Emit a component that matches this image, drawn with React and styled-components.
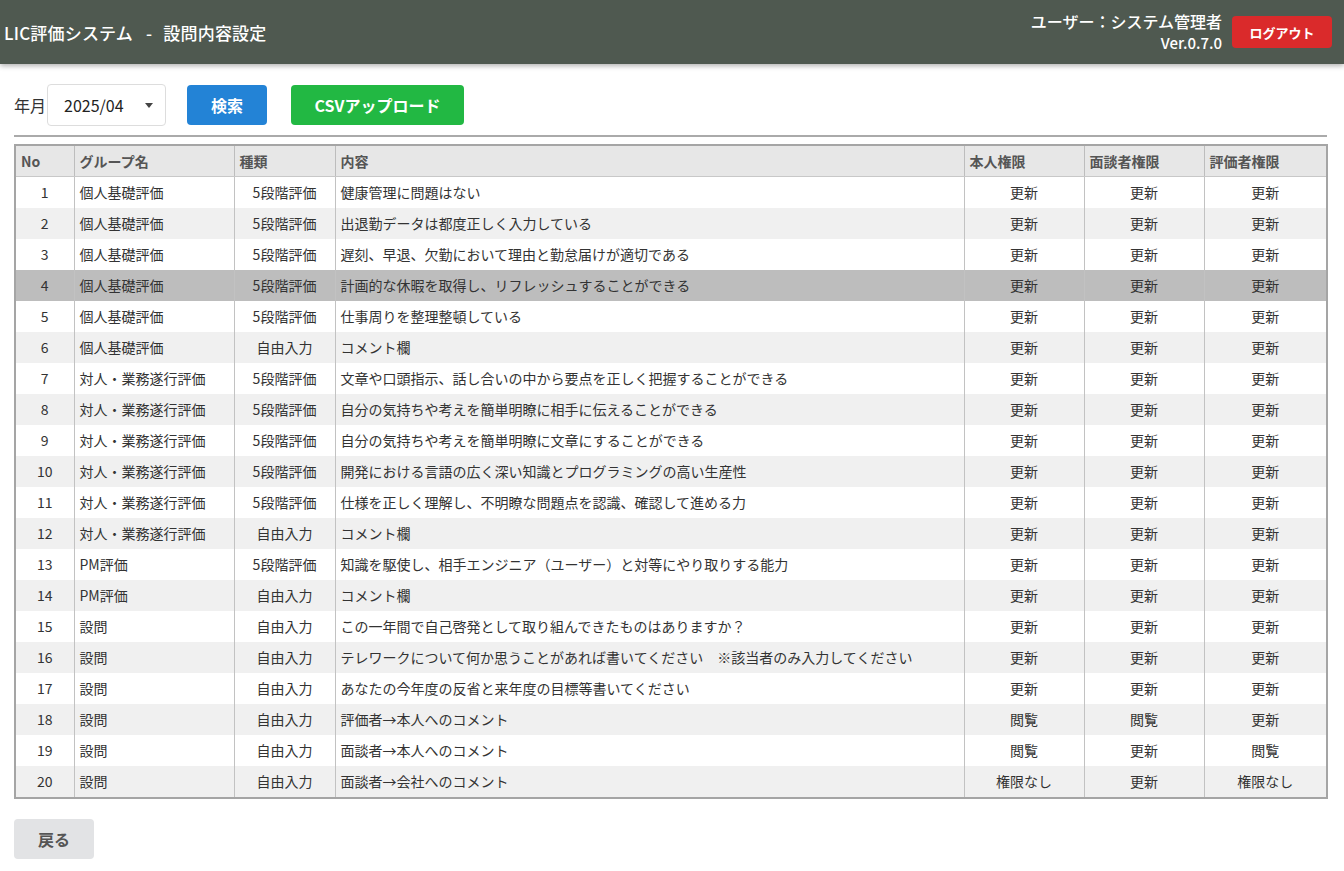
import React from 'react';
import styled, { createGlobalStyle } from 'styled-components';

const GlobalStyle = createGlobalStyle`
  body {
    margin: 0;
    background: #fff;
    font-family: "Noto Sans CJK JP", "Noto Sans", sans-serif;
    color: #333;
  }
`;

const Header = styled.header`
  display: flex;
  align-items: center;
  justify-content: space-between;
  height: 64px;
  padding: 0 12px 0 4px;
  background: #4f5950;
  box-shadow: 0 2px 5px rgba(0, 0, 0, 0.3);
  color: #fff;
`;

const Title = styled.h1`
  margin: 0;
  font-size: 17px;
  font-weight: 500;
  letter-spacing: 0.2px;
`;

const Dash = styled.span`
  margin: 0 11px 0 13px;
`;

const HeaderRight = styled.div`
  display: flex;
  align-items: center;
  gap: 10px;
`;

const UserInfo = styled.div`
  display: flex;
  flex-direction: column;
  align-items: flex-end;
  line-height: 22px;
  font-size: 16px;
  font-weight: 500;
`;

const Version = styled.span`
  font-size: 15px;
`;

const LogoutButton = styled.button`
  width: 100px;
  height: 32px;
  border: none;
  border-radius: 4px;
  background: #da2a2b;
  color: #fff;
  font-family: inherit;
  font-size: 13px;
  font-weight: 700;
  cursor: pointer;
`;

const Main = styled.main`
  padding: 20px 17px 0 14px;
`;

const Toolbar = styled.div`
  display: flex;
  align-items: center;
  height: 42px;
  padding-bottom: 9px;
  border-bottom: 2px solid #aaa;
`;

const Label = styled.span`
  font-size: 16px;
  margin-right: 1px;
`;

const SelectBox = styled.div`
  display: flex;
  align-items: center;
  justify-content: space-between;
  box-sizing: border-box;
  width: 119px;
  height: 42px;
  padding: 0 12px 0 16px;
  border: 1px solid #ddd;
  border-radius: 4px;
  font-size: 16px;
  color: #222;
`;

const Caret = styled.span`
  width: 0;
  height: 0;
  border-left: 4px solid transparent;
  border-right: 4px solid transparent;
  border-top: 5px solid #444;
`;

const ActionButton = styled.button`
  height: 40px;
  width: ${p => p.$width}px;
  margin-left: ${p => p.$gap}px;
  border: none;
  border-radius: 4px;
  background: ${p => p.$color};
  color: #fff;
  font-family: inherit;
  font-size: 16px;
  font-weight: 700;
  cursor: pointer;
`;

const Table = styled.table`
  width: 1312px;
  margin-top: 7px;
  table-layout: fixed;
  border-collapse: collapse;
  border: 2px solid #a5a5a5;
  font-size: 14px;
`;

const Th = styled.th`
  box-sizing: border-box;
  height: 31px;
  padding: 0 5px;
  background: #e7e7e7;
  border: 1px solid #bdbdbd;
  border-bottom: 1px solid #c8c8c8;
  text-align: left;
  font-weight: 700;
  color: #555;
  width: ${p => p.$w}px;
`;

const Row = styled.tr`
  background: ${p => (p.$selected ? '#bdbdbd' : p.$even ? '#f0f0f0' : '#fff')};
`;

const Td = styled.td`
  height: 31px;
  padding: 0 5px;
  border-left: 1px solid #c2c2c2;
  border-right: 1px solid #c2c2c2;
  text-align: ${p => (p.$center ? 'center' : 'left')};
  color: #333;
  white-space: nowrap;
  overflow: hidden;
`;

const BackButton = styled.button`
  margin-top: 20px;
  width: 80px;
  height: 40px;
  border: none;
  border-radius: 4px;
  background: #e2e3e5;
  color: #555;
  font-family: inherit;
  font-size: 16px;
  font-weight: 700;
  cursor: pointer;
`;

const KIHON = '個人基礎評価';
const TAIJIN = '対人・業務遂行評価';
const FIVE = '5段階評価';
const FREE = '自由入力';
const U = '更新';
const V = '閲覧';
const N = '権限なし';

const rows = [
  [KIHON, FIVE, '健康管理に問題はない', U, U, U],
  [KIHON, FIVE, '出退勤データは都度正しく入力している', U, U, U],
  [KIHON, FIVE, '遅刻、早退、欠勤において理由と勤怠届けが適切である', U, U, U],
  [KIHON, FIVE, '計画的な休暇を取得し、リフレッシュすることができる', U, U, U],
  [KIHON, FIVE, '仕事周りを整理整頓している', U, U, U],
  [KIHON, FREE, 'コメント欄', U, U, U],
  [TAIJIN, FIVE, '文章や口頭指示、話し合いの中から要点を正しく把握することができる', U, U, U],
  [TAIJIN, FIVE, '自分の気持ちや考えを簡単明瞭に相手に伝えることができる', U, U, U],
  [TAIJIN, FIVE, '自分の気持ちや考えを簡単明瞭に文章にすることができる', U, U, U],
  [TAIJIN, FIVE, '開発における言語の広く深い知識とプログラミングの高い生産性', U, U, U],
  [TAIJIN, FIVE, '仕様を正しく理解し、不明瞭な問題点を認識、確認して進める力', U, U, U],
  [TAIJIN, FREE, 'コメント欄', U, U, U],
  ['PM評価', FIVE, '知識を駆使し、相手エンジニア（ユーザー）と対等にやり取りする能力', U, U, U],
  ['PM評価', FREE, 'コメント欄', U, U, U],
  ['設問', FREE, 'この一年間で自己啓発として取り組んできたものはありますか？', U, U, U],
  ['設問', FREE, 'テレワークについて何か思うことがあれば書いてください　※該当者のみ入力してください', U, U, U],
  ['設問', FREE, 'あなたの今年度の反省と来年度の目標等書いてください', U, U, U],
  ['設問', FREE, '評価者→本人へのコメント', V, V, U],
  ['設問', FREE, '面談者→本人へのコメント', V, U, V],
  ['設問', FREE, '面談者→会社へのコメント', N, U, N],
];

const columns = [
  ['No', 59],
  ['グループ名', 160],
  ['種類', 101],
  ['内容', 629],
  ['本人権限', 120],
  ['面談者権限', 120],
  ['評価者権限', 123],
];

export default function App() {
  return (
    <>
      <GlobalStyle />
      <Header>
        <Title>
          LIC評価システム<Dash>-</Dash>設問内容設定
        </Title>
        <HeaderRight>
          <UserInfo>
            <span>ユーザー：システム管理者</span>
            <Version>Ver.0.7.0</Version>
          </UserInfo>
          <LogoutButton>ログアウト</LogoutButton>
        </HeaderRight>
      </Header>
      <Main>
        <Toolbar>
          <Label>年月</Label>
          <SelectBox>
            <span>2025/04</span>
            <Caret />
          </SelectBox>
          <ActionButton $width={80} $gap={21} $color="#2383d6">検索</ActionButton>
          <ActionButton $width={173} $gap={24} $color="#22b843">CSVアップロード</ActionButton>
        </Toolbar>
        <Table>
          <thead>
            <tr>
              {columns.map(([name, w]) => (
                <Th key={name} $w={w}>{name}</Th>
              ))}
            </tr>
          </thead>
          <tbody>
            {rows.map((r, i) => (
              <Row key={i} $even={i % 2 === 1} $selected={i === 3}>
                <Td $center>{i + 1}</Td>
                <Td>{r[0]}</Td>
                <Td $center>{r[1]}</Td>
                <Td>{r[2]}</Td>
                <Td $center>{r[3]}</Td>
                <Td $center>{r[4]}</Td>
                <Td $center>{r[5]}</Td>
              </Row>
            ))}
          </tbody>
        </Table>
        <BackButton>戻る</BackButton>
      </Main>
    </>
  );
}
